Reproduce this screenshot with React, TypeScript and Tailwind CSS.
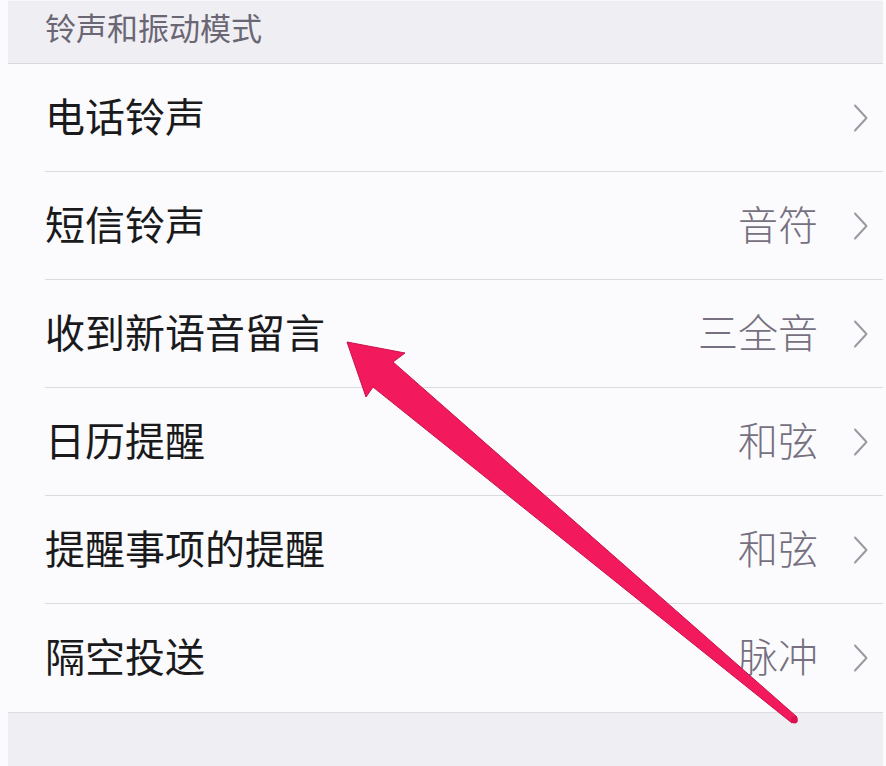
import React from "react";

const rows: { label: string; value: string }[] = [
  { label: "电话铃声", value: "" },
  { label: "短信铃声", value: "音符" },
  { label: "收到新语音留言", value: "三全音" },
  { label: "日历提醒", value: "和弦" },
  { label: "提醒事项的提醒", value: "和弦" },
  { label: "隔空投送", value: "脉冲" },
];

function Chevron() {
  return (
    <svg width="16" height="28" viewBox="0 0 16 28" className="shrink-0">
      <path d="M2 1.5 L13.5 14 L2 26.5" fill="none" stroke="#9b9aa2" strokeWidth="2" strokeLinecap="round" strokeLinejoin="round" />
    </svg>
  );
}

export default function App() {
  const font = { fontFamily: '"Noto Sans CJK SC", "Noto Sans", sans-serif' };
  return (
    <div className="relative w-[886px] h-[766px] overflow-hidden bg-[#fbfbfd] pl-[8px] pr-[3px] flex flex-col" style={font}>
      <div className="h-[64px] shrink-0 bg-[#eeeef3] border-b border-[#d9d9de] border-t border-t-[#f7f7fa] flex items-center pl-[37px]">
        <span className="text-[31px] leading-none text-[#6b6674] mb-[12px]">铃声和振动模式</span>
      </div>
      <div className="flex flex-col bg-[#fbfbfd]">
        {rows.map((r, i) => (
          <div key={i} className="pl-[37px]">
            <div className={`h-[108px] flex items-center pr-[14px] ${i < rows.length - 1 ? "border-b border-[#dcdce0]" : ""}`}>
              <span className="text-[40px] leading-none text-[#1a1a1c] flex-1 mb-[6px]">{r.label}</span>
              {r.value && (
                <span className="text-[40px] leading-none font-light text-[#767080] mr-[35px] mb-[6px]">{r.value}</span>
              )}
              <Chevron />
            </div>
          </div>
        ))}
      </div>
      <div className="flex-1 bg-[#eeeef3] border-t border-[#dcdce0]" />
      <svg className="absolute left-0 top-0 pointer-events-none" width="886" height="766" viewBox="0 0 886 766">
        <polygon
          points="347,342 405,353 393,362 797,717 792,723 373,387 366,397"
          fill="#f2195c"
          stroke="#c8124c"
          strokeWidth="1"
          strokeLinejoin="round"
        />
        <circle cx="794.5" cy="720" r="3.4" fill="#d8134f" />
      </svg>
    </div>
  );
}
